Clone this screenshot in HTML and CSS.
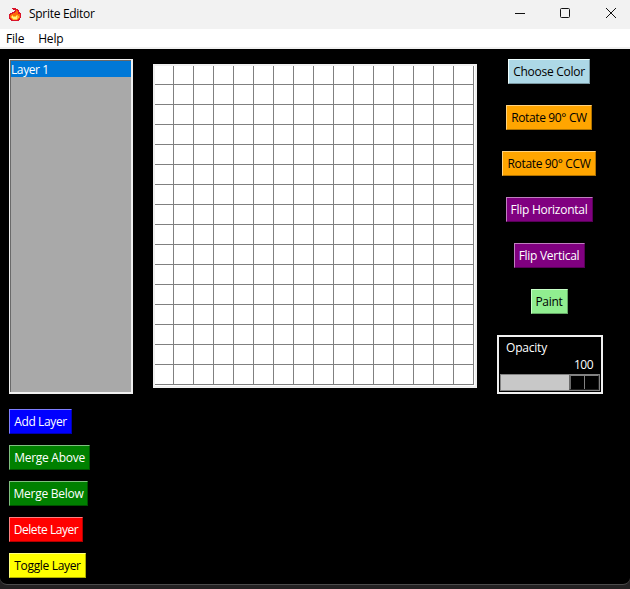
FILE: index.html
```html
<!DOCTYPE html>
<html lang="en">
<head>
<meta charset="utf-8">
<title>Sprite Editor</title>
<link rel="stylesheet" href="styles.css">
</head>
<body>
<div class="window">
  <header class="titlebar">
    <svg class="flame" width="14" height="14" viewBox="0 0 14 14" shape-rendering="crispEdges">
      <path fill="#d9142b" d="M4 0h4v1h2v1h1v2h1v1h1v5h-1v2h-1v1h-8v-1h-1v-1h-1v-5h1v-1h2v-1h2v-1h1v-1h-2v-1h-1z"/>
      <path fill="#fc6a08" d="M8 2h1v1h1v3h2v4h-1v1h-1v1h-6v-1h-1v-1h-1v-3h1v-1h2v-1h2v-1h1z"/>
      <path fill="#ffb52d" d="M3 8h1v-1h1v1h3v-1h2v1h1v2h-1v1h-1v1h-4v-1h-1v-1h-1z"/>
      <path fill="#fff27a" d="M4 8h1v1h3v-1h1v3h-4v-1h-1z"/>
    </svg>
    <span class="title">Sprite Editor</span>
    <svg class="controls" width="110" height="20" viewBox="0 0 110 20" fill="none" stroke="#111">
      <path d="M5 9.500h10"/>
      <rect x="50.500" y="4.500" width="9" height="9" rx="1"/>
      <path d="M96 4l10 10M106 4l-10 10"/>
    </svg>
  </header>
  <nav class="menubar"><span class="file">File</span><span>Help</span></nav>
  <main class="workspace">
    <section class="layers">
      <div class="listbox"><div class="item">Layer 1</div></div>
      <button class="btn add">Add Layer</button>
      <button class="btn above">Merge Above</button>
      <button class="btn below">Merge Below</button>
      <button class="btn delete">Delete Layer</button>
      <button class="btn toggle">Toggle Layer</button>
    </section>
    <section class="canvas">
      <svg width="320" height="320" viewBox="0 0 320 320" shape-rendering="crispEdges">
        <defs>
          <pattern id="cell" x="-1" y="-1" width="20" height="20" patternUnits="userSpaceOnUse">
            <path fill="#808080" d="M19 0h1v20h-1zM0 19h20v1h-20z"/>
          </pattern>
        </defs>
        <rect width="319" height="319" fill="url(#cell)"/>
      </svg>
    </section>
    <aside class="tools">
      <button class="btn choose">Choose Color</button>
      <button class="btn cw">Rotate 90° CW</button>
      <button class="btn ccw">Rotate 90° CCW</button>
      <button class="btn fliph">Flip Horizontal</button>
      <button class="btn flipv">Flip Vertical</button>
      <button class="btn paint">Paint</button>
      <div class="opacity">
        <div class="label">Opacity</div>
        <div class="value">100</div>
        <div class="trough"><div class="slider"><i></i></div></div>
      </div>
    </aside>
  </main>
</div>
</body>
</html>
```
FILE: styles.css
```css
* { box-sizing: border-box; }
body {
  margin: 0;
  width: 630px;
  height: 589px;
  overflow: hidden;
  background: #232122;
  font: 12px/16px "Open Sans", "Noto Sans", sans-serif;
  color: #000;
}
.window {
  height: 585px;
  background: #000;
  border-bottom: 1px solid #4c4c4c;
  border-radius: 0 0 7px 7px;
  overflow: hidden;
}
.titlebar {
  height: 29px;
  background: #f2f2f2;
  display: flex;
  align-items: flex-start;
  padding: 8px 10px 0 8px;
}
.flame { flex: none; }
.title { margin-left: 7px; margin-top: -2px; letter-spacing: -0.3px; }
.controls { margin-left: auto; margin-top: -4px; }
.menubar {
  height: 20px;
  background: #fff;
  border-bottom: 2px solid #f0f0f0;
  padding: 2px 6px;
  display: flex;
  gap: 14px;
  letter-spacing: -0.2px;
}
.workspace { display: flex; align-items: flex-start; padding: 10px 0 0 9px; }
.layers {
  width: 124px;
  display: flex;
  flex-direction: column;
  align-items: flex-start;
  gap: 11px;
}
.listbox {
  width: 124px;
  height: 335px;
  margin-bottom: 4px;
  background: #a9a9a9;
  border: 1px solid #f0f0f0;
  border-right-width: 2px;
  border-bottom-width: 2px;
  box-shadow: inset 1px 1px #696969;
  padding: 1px 0 0 1px;
}
.item { height: 16px; line-height: 17px; background: #0078d7; color: #fff; letter-spacing: -0.4px; }
.btn {
  height: 25px;
  padding: 1px 0 0;
  font: inherit;
  line-height: 22px;
  letter-spacing: -0.27px;
  white-space: nowrap;
  text-align: center;
  border: 1px solid;
  border-radius: 0;
}
.add { width: 63px; letter-spacing: -0.38px; color: #fff; background: #00f; border-color: #7f7fff #0000b0 #0000b0 #7f7fff; }
.above, .below { color: #fff; background: #008000; border-color: #7fbf7f #005000 #005000 #7fbf7f; }
.above { width: 81px; }
.below { width: 79px; }
.delete { width: 74px; letter-spacing: -0.45px; color: #fff; background: #f00; border-color: #ff7f7f #b00000 #b00000 #ff7f7f; }
.toggle { width: 77px; letter-spacing: -0.33px; color: #000; background: #ff0; border-color: #ffff7f #b0b000 #b0b000 #ffff7f; }
.canvas {
  margin: 5px 0 0 20px;
  width: 324px;
  height: 324px;
  border: 2px solid #f0f0f0;
  background: #fff;
}
.canvas svg { display: block; }
.tools {
  margin-left: 19px;
  width: 106px;
  display: flex;
  flex-direction: column;
  align-items: center;
  gap: 21px;
}
.choose { width: 82px; color: #000; background: #add8e6; border-color: #f0ffff #78969f #78969f #f0ffff; }
.cw, .ccw { letter-spacing: -0.36px; color: #000; background: #ffa500; border-color: #ffd27f #b07200 #b07200 #ffd27f; }
.cw { width: 86px; }
.ccw { width: 94px; }
.fliph, .flipv { color: #fff; background: #800080; border-color: #bf7fbf #580058 #580058 #bf7fbf; }
.fliph { width: 87px; }
.flipv { width: 71px; }
.paint { width: 37px; color: #000; background: #90ee90; border-color: #c8ffc8 #64a564 #64a564 #c8ffc8; }
.opacity {
  width: 106px;
  height: 59px;
  margin-right: -2px;
  border: 2px solid #f0f0f0;
  background: #000;
  color: #fff;
  padding: 3px 1px 0;
}
.label { padding-left: 6px; letter-spacing: -0.2px; }
.value { padding: 1px 7px 0 0; letter-spacing: -0.5px; text-align: right; }
.trough {
  height: 17px;
  margin-top: 1px;
  background: #c8c8c8;
  border: 1px solid #828282;
  display: flex;
  justify-content: flex-end;
}
.slider {
  width: 30px;
  height: 15px;
  background: #000;
  border: 1px solid #202020;
  border-left: 2px solid #696969;
  border-top: 1px solid #828282;
  display: flex;
  justify-content: center;
}
.slider i { width: 1px; background: #828282; }
```
